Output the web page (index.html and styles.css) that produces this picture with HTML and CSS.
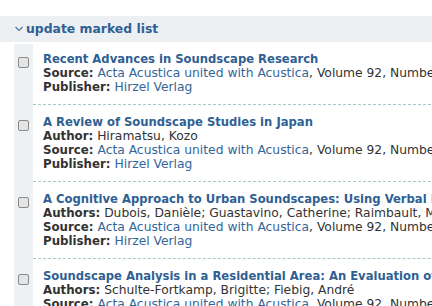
FILE: index.html
```html
<!DOCTYPE html>
<html lang="en">
<head>
<meta charset="UTF-8">
<meta name="viewport" content="width=device-width, initial-scale=1.0">
<title>Marked List</title>
<link rel="stylesheet" href="styles.css">
</head>
<body>
    <div class="list-header">
        <svg class="chevron" width="8" height="6" viewBox="0 0 8 6">
            <path d="M0.5 1 L4 4.5 L7.5 1" fill="none" stroke="#4a76a8" stroke-width="1.2"/>
        </svg>
        <a href="#" class="update-link">update marked list</a>
    </div>

    <div class="results">
        <div class="result">
            <div class="mark"><span class="checkbox"></span></div>
            <div class="details">
                <a href="#" class="title">Recent Advances in Soundscape Research</a>
                <div><b>Source:</b> <a href="#">Acta Acustica united with Acustica</a>, Volume 92, Number 6, November/December 2006</div>
                <div><b>Publisher:</b> <a href="#">Hirzel Verlag</a></div>
            </div>
        </div>

        <div class="result">
            <div class="mark"><span class="checkbox"></span></div>
            <div class="details">
                <a href="#" class="title">A Review of Soundscape Studies in Japan</a>
                <div><b>Author:</b> Hiramatsu, Kozo</div>
                <div><b>Source:</b> <a href="#">Acta Acustica united with Acustica</a>, Volume 92, Number 6, November/December 2006</div>
                <div><b>Publisher:</b> <a href="#">Hirzel Verlag</a></div>
            </div>
        </div>

        <div class="result">
            <div class="mark"><span class="checkbox"></span></div>
            <div class="details">
                <a href="#" class="title">A Cognitive Approach to Urban Soundscapes: Using Verbal Data to Access Everyday Life Auditory Categories</a>
                <div><b>Authors:</b> Dubois, Danièle; Guastavino, Catherine; Raimbault, Manon</div>
                <div><b>Source:</b> <a href="#">Acta Acustica united with Acustica</a>, Volume 92, Number 6, November/December 2006</div>
                <div><b>Publisher:</b> <a href="#">Hirzel Verlag</a></div>
            </div>
        </div>

        <div class="result">
            <div class="mark"><span class="checkbox"></span></div>
            <div class="details">
                <a href="#" class="title">Soundscape Analysis in a Residential Area: An Evaluation of Noise and People's Mind</a>
                <div><b>Authors:</b> Schulte-Fortkamp, Brigitte; Fiebig, André</div>
                <div><b>Source:</b> <a href="#">Acta Acustica united with Acustica</a>, Volume 92, Number 6, November/December 2006</div>
                <div><b>Publisher:</b> <a href="#">Hirzel Verlag</a></div>
            </div>
        </div>
    </div>
</body>
</html>
```

FILE: styles.css
```css
body {
    font-family: "DejaVu Sans", Verdana, sans-serif;
    font-size: 12.3px;
    line-height: 14px;
    color: #333;
    margin: 0;
    padding: 0;
    background-color: #fff;
    overflow: hidden;
}

a {
    color: #336699;
    text-decoration: none;
}

.list-header {
    margin-top: 16px;
    height: 26px;
    background-color: #edf0f3;
    display: flex;
    align-items: center;
    padding-left: 15px;
}

.chevron {
    margin-right: 3px;
}

.update-link {
    font-size: 12.4px;
    font-weight: bold;
    color: #2f5f93;
}

.results {
    margin-left: 14px;
}

.result {
    display: flex;
}

.mark {
    width: 19px;
    flex-shrink: 0;
    background-color: #eef1f4;
    padding-top: 15px;
    padding-left: 4px;
    box-sizing: border-box;
}

.result:first-child .mark {
    margin-top: 2px;
    padding-top: 13px;
}

.checkbox {
    display: block;
    width: 9px;
    height: 9px;
    border: 1px solid #8a8a8a;
    border-radius: 2px;
    background-color: #e4e4e4;
}

.details {
    flex: 1;
    padding: 10px 0 10px 10px;
    border-bottom: 1px dashed #a9c6cf;
    white-space: nowrap;
}

.details b {
    color: #333;
    font-size: 11.8px;
}

.title {
    display: block;
    font-size: 11.6px;
    font-weight: bold;
    color: #2f5f93;
}
```
